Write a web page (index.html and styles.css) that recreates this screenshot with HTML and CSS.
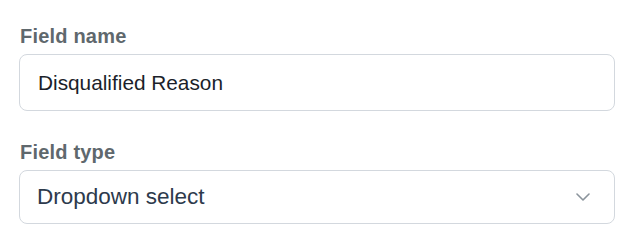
FILE: index.html
```html
<!DOCTYPE html>
<html>
<head>
<meta charset="utf-8">
<link rel="stylesheet" href="styles.css">
</head>
<body>
<form class="form">
  <div class="field">
    <label class="label" for="fname">Field name</label>
    <input class="input" id="fname" type="text" value="Disqualified Reason">
  </div>
  <div class="field">
    <label class="label" for="ftype">Field type</label>
    <div class="select">
      <span class="select-value">Dropdown select</span>
      <svg class="chevron" width="14" height="8" viewBox="0 0 14 8" fill="none">
        <path d="M1 1l6 6 6-6" stroke="#8b949c" stroke-width="1.6" stroke-linecap="round" stroke-linejoin="round"/>
      </svg>
    </div>
  </div>
</form>
</body>
</html>
```
FILE: styles.css
```css
html, body {
  margin: 0;
  padding: 0;
  background: #ffffff;
}
body {
  font-family: "Liberation Sans", Arial, sans-serif;
}
.form {
  display: flex;
  flex-direction: column;
  gap: 29px;
  padding: 24px 20px 0 19px;
}
.field {
  display: flex;
  flex-direction: column;
  gap: 6px;
}
.label {
  font-size: 20px;
  line-height: 24px;
  font-weight: 700;
  letter-spacing: 0.2px;
  color: #5f686d;
  padding-left: 1px;
}
.input {
  box-sizing: border-box;
  height: 57px;
  width: 100%;
  margin: 0;
  padding: 0 18px;
  border: 1px solid #d3d8de;
  border-radius: 8px;
  font-family: "Liberation Sans", Arial, sans-serif;
  font-size: 20.8px;
  color: #1b1f2a;
  background: #fff;
  outline: none;
}
.select {
  box-sizing: border-box;
  height: 54px;
  display: flex;
  align-items: center;
  justify-content: space-between;
  padding: 0 24px 0 17px;
  border: 1px solid #d3d8de;
  border-radius: 8px;
}
.select-value {
  font-size: 22.5px;
  color: #2d3a4c;
}
.chevron {
  display: block;
}
```
